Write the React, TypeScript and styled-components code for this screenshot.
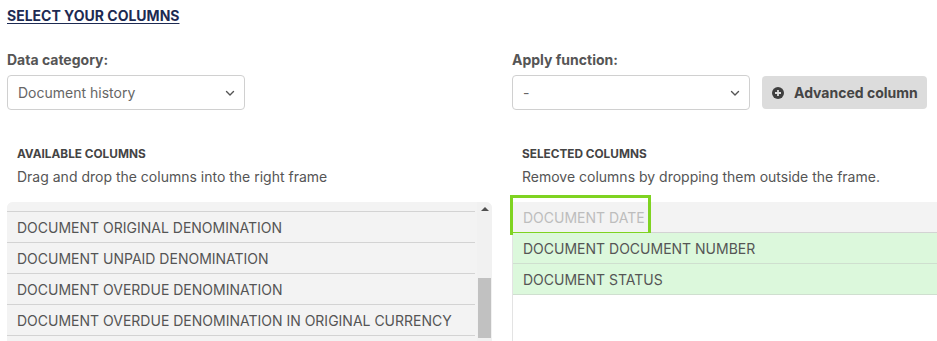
import styled, { createGlobalStyle } from "styled-components";

const GlobalStyle = createGlobalStyle`
    html, body {
        margin: 0;
        padding: 0;
        background: #FFF;
        overflow: hidden;
    }
    body {
        font-family: Inter, "Noto Sans", Arial, sans-serif;
        -webkit-font-smoothing: antialiased;
    }
`

const Page = styled.div`
    width: 937px;
    height: 341px;
    overflow: hidden;
    padding: 7px 0 0 7px;
    box-sizing: border-box;
`

const Title = styled.h1`
    margin: 0;
    font-size: 14px;
    line-height: 17px;
    font-weight: 700;
    color: #1d2a52;
    text-decoration: underline;
    text-underline-offset: 2px;
`

const Columns = styled.div`
    display: grid;
    grid-template-columns: 485px 1fr;
    column-gap: 20px;
    margin-top: 27px;
`

const Field = styled.div`
    display: flex;
    flex-direction: column;
`

const FieldLabel = styled.label`
    font-size: 14px;
    line-height: 17px;
    font-weight: 700;
    color: #555;
    margin-bottom: 7px;
`

const FieldRow = styled.div`
    display: flex;
    align-items: center;
    gap: 12px;
`

const Select = styled.div`
    width: 238px;
    height: 35px;
    box-sizing: border-box;
    border: 1px solid #d0d0d0;
    border-radius: 4px;
    display: flex;
    align-items: center;
    justify-content: space-between;
    padding: 0 8px 0 10px;
    font-size: 14px;
    color: #666;
    background: #FFF;
`

const Button = styled.button`
    height: 33px;
    border: none;
    border-radius: 4px;
    background: #dcdcdc;
    color: #454545;
    font-family: inherit;
    font-size: 14px;
    font-weight: 700;
    display: flex;
    align-items: center;
    gap: 10px;
    padding: 0 9px 0 10px;
`

const Section = styled.div`
    margin-top: 37px;
`

const SectionHead = styled.div`
    padding-left: 10px;
    height: 55px;
`

const SectionTitle = styled.h3`
    margin: 0;
    font-size: 11.8px;
    line-height: 14px;
    font-weight: 700;
    color: #444;
`

const SectionHint = styled.p`
    margin: 7px 0 0;
    font-size: 14px;
    line-height: 17px;
    color: #555;
`

const AvailableFrame = styled.div`
    display: flex;
    height: 140px;
    background: #f3f3f3;
    border-radius: 6px 6px 0 0;
    overflow: hidden;
`

const RowsViewport = styled.div`
    flex: 1;
    overflow: hidden;
`

const Rows = styled.div<{ $offset: number }>`
    margin-top: ${p => -p.$offset}px;
`

const Row = styled.div<{ $tone?: "muted" | "green" }>`
    height: 30px;
    display: flex;
    align-items: center;
    padding-left: 10px;
    border-bottom: 1px solid ${p => (p.$tone === "green" ? "#cfdfcf" : "#d3d3d3")};
    font-size: 14px;
    color: ${p => (p.$tone === "muted" ? "#bdbdbd" : "#555")};
    background: ${p => (p.$tone === "green" ? "#dcf8dc" : "#f3f3f3")};
    white-space: nowrap;
    position: relative;
`

const Scrollbar = styled.div`
    width: 15px;
    margin-left: 2px;
    background: #f1f1f1;
    display: flex;
    flex-direction: column;
    align-items: center;
`

const ArrowUp = styled.div`
    margin-top: 5px;
    width: 0;
    height: 0;
    border-left: 4px solid transparent;
    border-right: 4px solid transparent;
    border-bottom: 4px solid #505050;
`

const Thumb = styled.div`
    width: 13px;
    height: 60px;
    margin-top: 67px;
    background: #c1c1c1;
`

const SelectedFrame = styled.div`
    height: 140px;
    border-left: 1px solid #e3e3e3;
    border-radius: 6px 0 0 0;
    background: #FFF;
`

const DropHighlight = styled.div`
    position: absolute;
    left: -3px;
    top: -7px;
    width: 141px;
    height: 40px;
    box-sizing: border-box;
    border: 3px solid #7fd321;
    pointer-events: none;
`

const Chevron = () => (
    <svg width="12" height="12" viewBox="0 0 12 12" fill="none">
        <path d="M2.5 4.5 L6 8 L9.5 4.5" stroke="#555" strokeWidth="1.4" strokeLinecap="round" strokeLinejoin="round" />
    </svg>
)

const PlusCircle = () => (
    <svg width="12" height="12" viewBox="0 0 12 12">
        <circle cx="6" cy="6" r="6" fill="#3f3f3f" />
        <path d="M6 3 V9 M3 6 H9" stroke="#dcdcdc" strokeWidth="1.8" />
    </svg>
)

const available = [
    "DOCUMENT DUE DATE",
    "DOCUMENT ORIGINAL DENOMINATION",
    "DOCUMENT UNPAID DENOMINATION",
    "DOCUMENT OVERDUE DENOMINATION",
    "DOCUMENT OVERDUE DENOMINATION IN ORIGINAL CURRENCY",
    "DOCUMENT CURRENCY",
]

const selected = ["DOCUMENT DOCUMENT NUMBER", "DOCUMENT STATUS"]

export default function App() {
    return (
        <>
            <GlobalStyle />
            <Page>
                <Title>SELECT YOUR COLUMNS</Title>
                <Columns>
                    <div>
                        <Field>
                            <FieldLabel>Data category:</FieldLabel>
                            <FieldRow>
                                <Select>
                                    Document history
                                    <Chevron />
                                </Select>
                            </FieldRow>
                        </Field>
                        <Section>
                            <SectionHead>
                                <SectionTitle>AVAILABLE COLUMNS</SectionTitle>
                                <SectionHint>Drag and drop the columns into the right frame</SectionHint>
                            </SectionHead>
                            <AvailableFrame>
                                <RowsViewport>
                                    <Rows $offset={21}>
                                        {available.map(name => (
                                            <Row key={name}>{name}</Row>
                                        ))}
                                    </Rows>
                                </RowsViewport>
                                <Scrollbar>
                                    <ArrowUp />
                                    <Thumb />
                                </Scrollbar>
                            </AvailableFrame>
                        </Section>
                    </div>
                    <div>
                        <Field>
                            <FieldLabel>Apply function:</FieldLabel>
                            <FieldRow>
                                <Select>
                                    -
                                    <Chevron />
                                </Select>
                                <Button>
                                    <PlusCircle />
                                    Advanced column
                                </Button>
                            </FieldRow>
                        </Field>
                        <Section>
                            <SectionHead>
                                <SectionTitle>SELECTED COLUMNS</SectionTitle>
                                <SectionHint>Remove columns by dropping them outside the frame.</SectionHint>
                            </SectionHead>
                            <SelectedFrame>
                                <Row $tone="muted">
                                    DOCUMENT DATE
                                    <DropHighlight />
                                </Row>
                                {selected.map(name => (
                                    <Row key={name} $tone="green">{name}</Row>
                                ))}
                            </SelectedFrame>
                        </Section>
                    </div>
                </Columns>
            </Page>
        </>
    )
}
